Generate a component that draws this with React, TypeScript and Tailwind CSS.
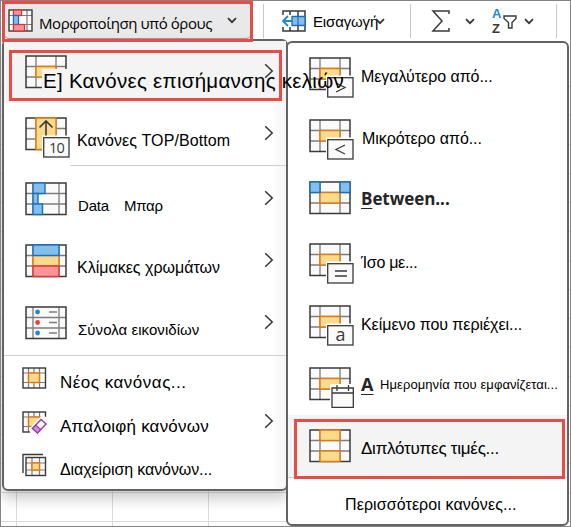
import type { ReactNode } from "react";

const DARK = "#3b3a39";
const MID = "#7f7d7b";
const ORANGE = "#e07a10";
const SAND = "#fadb8e";
const BLUE = "#1a6fba";
const SKY = "#83beec";

function Grid({ v = [11, 31], children }: { v?: number[]; children?: ReactNode }) {
  return (
    <svg width="46" height="43" viewBox="0 0 46 43" className="block shrink-0" fill="none">
      <rect x="1" y="1" width="40" height="31.5" fill="#fafafa" />
      <path d={`M1 11.5H41M1 22H41M${v[0]} 1V32M${v[1]} 1V32`} stroke={MID} strokeWidth="1.3" />
      <rect x="1" y="1" width="40" height="31.5" stroke={DARK} strokeWidth="1.5" />
      {children}
    </svg>
  );
}

function Cell({ y, h = 10.5, fill = SAND, stroke = ORANGE, x = 11, w = 20 }: { y: number; h?: number; fill?: string; stroke?: string; x?: number; w?: number }) {
  return <rect x={x} y={y} width={w} height={h} fill={fill} stroke={stroke} strokeWidth="1.4" />;
}

function Badge({ children }: { children: ReactNode }) {
  return (
    <g>
      <path d="M17 18.5H46V43H17Z" fill="#fff" />
      <rect x="18.7" y="20.7" width="25.3" height="19.3" fill="#fafafa" stroke={DARK} strokeWidth="1.3" />
      {children}
    </g>
  );
}

function CompareIcon({ children }: { children?: ReactNode }) {
  return (
    <Grid>
      <Cell y={11.5} />
      {children}
    </Grid>
  );
}

function SmallGrid({ children }: { children?: ReactNode }) {
  return (
    <svg width="26" height="24" viewBox="0 0 26 24" className="block shrink-0" fill="none">
      <rect x="1" y="1" width="22.5" height="20" fill="#fafafa" />
      <path d="M1 6H23M1 15.5H23M6.5 1V21M17.5 1V21M12 1V21" stroke={MID} strokeWidth="1.2" />
      <rect x="1" y="1" width="22.5" height="20" stroke={DARK} strokeWidth="1.4" />
      {children}
    </svg>
  );
}

function Down({ className = "" }: { className?: string }) {
  return (
    <svg width="10" height="7" viewBox="0 0 10 7" fill="none" className={`block shrink-0 ${className}`}>
      <path d="M1 1.2L5 5.2L9 1.2" stroke="#333" strokeWidth="1.7" />
    </svg>
  );
}

function Right({ className = "" }: { className?: string }) {
  return (
    <svg width="10" height="16" viewBox="0 0 10 16" fill="none" className={`block shrink-0 ${className}`}>
      <path d="M1.2 1.2L8.2 8L1.2 14.8" stroke="#333" strokeWidth="1.5" />
    </svg>
  );
}

function Row({ icon, label, arrow = true, className = "" }: { icon: ReactNode; label?: ReactNode; arrow?: boolean; className?: string }) {
  return (
    <div className={`flex h-[62px] shrink-0 items-start pl-[21px] pr-3 ${className}`}>
      <div className="w-[52px] shrink-0 pt-[14px]">{icon}</div>
      {label}
      {arrow && <Right className="ml-auto mt-[22px]" />}
    </div>
  );
}

function RuleRow({ icon, label, className = "" }: { icon: ReactNode; label: ReactNode; className?: string }) {
  return (
    <div className={`flex h-[62px] items-start pl-[21px] ${className}`}>
      <div className="w-[52px] shrink-0 pt-[14px]">{icon}</div>
      {label}
    </div>
  );
}

function Toolbar() {
  return (
    <div className="flex h-[42px] items-start bg-white pl-[3px]">
      <div className="mt-[2px] flex h-[37px] w-[249px] items-start rounded-md border border-[#9a9a9a] bg-[#e9e9e9] pl-1">
        <svg width="26" height="24" viewBox="0 0 26 24" fill="none" className="mt-[6px] block shrink-0">
          <rect x="1" y="1" width="23" height="21" fill="#fafafa" />
          <path d="M1 6.5H24M1 15.5H24M19 1V22M5.5 1V22" stroke={MID} strokeWidth="1.2" />
          <rect x="1" y="1" width="23" height="21" stroke={DARK} strokeWidth="1.4" />
          <rect x="5.5" y="1" width="8" height="5.5" fill="#fd9398" stroke="#dc3434" strokeWidth="1.3" />
          <rect x="5.5" y="6.5" width="5" height="9" fill={SKY} stroke={BLUE} strokeWidth="1.2" />
          <rect x="5.5" y="15.5" width="11" height="6.5" fill="#fd9398" stroke="#dc3434" strokeWidth="1.3" />
        </svg>
        <span className="ml-[5px] mt-[10px] w-[174px] whitespace-nowrap font-['Open_Sans'] text-[15px] leading-5 tracking-[-0.42px]">Μορφοποίηση υπό όρους</span>
        <Down className="ml-[14px] mt-[14px]" />
      </div>
      <div className="ml-[11px] mt-1 h-[34px] w-px bg-[#c8c8c8]" />
      <svg width="26" height="24" viewBox="0 0 26 24" fill="none" className="ml-[17px] mt-[9px] block shrink-0">
        <path d="M2 6V2H24V22H2V18M9 2V22M17 2V22" stroke={DARK} strokeWidth="1.5" />
        <path d="M11 7.5H24V16.5H11Z" fill={SKY} stroke={BLUE} strokeWidth="1.3" />
        <path d="M17 8V16" stroke={BLUE} strokeWidth="1.2" />
        <path d="M0 6H10V18H0Z" fill="#fff" />
        <path d="M12 12H2M7 7L2 12L7 17" stroke="#2488d0" strokeWidth="1.8" />
      </svg>
      <span className="ml-[6px] mt-[12px] w-[62px] whitespace-nowrap text-[15px] leading-5 tracking-[-0.15px]">Εισαγωγή</span>
      <Down className="mt-[18px]" />
      <div className="ml-[25px] mt-1 h-[34px] w-px bg-[#c8c8c8]" />
      <svg width="20" height="24" viewBox="0 0 20 24" fill="none" className="ml-[20px] mt-[9px] block shrink-0">
        <path d="M18 5V2H2L11 12L2 22H18V19" stroke={DARK} strokeWidth="1.5" />
      </svg>
      <Down className="ml-[14px] mt-[18px]" />
      <div className="ml-[17px] mt-[6px] flex w-[11px] flex-col text-[13px] font-bold leading-[15px]">
        <span className="text-[#2488d0]">A</span>
        <span className="text-[#3b3a39]">Z</span>
      </div>
      <svg width="14" height="15" viewBox="0 0 14 15" fill="none" className="mt-[15px] block shrink-0">
        <path d="M1 1H13V3.5L9 7.5V13H5.5V7.5L1 3.5Z" stroke={DARK} strokeWidth="1.4" />
      </svg>
      <Down className="ml-[7px] mt-[18px]" />
      <div className="ml-[22px] mt-1 h-[34px] w-px bg-[#c8c8c8]" />
    </div>
  );
}

function Sheet() {
  return (
    <div className="relative h-[485px] overflow-hidden bg-white">
      <div className="flex flex-col pt-[16px]">
        {Array.from({ length: 16 }, (_, i) => (
          <div key={i} className="h-[29px] shrink-0 border-b border-[#dadada]" />
        ))}
      </div>
      <div className="absolute inset-0 flex pl-[16px]">
        {Array.from({ length: 6 }, (_, i) => (
          <div key={i} className="w-[96px] shrink-0 border-l border-[#dadada]" />
        ))}
      </div>
    </div>
  );
}

function FormatMenu() {
  return (
    <div className="absolute left-[2px] top-[39px] flex h-[452px] w-[286px] flex-col rounded-md border-2 border-[#636363] bg-linear-to-r from-white from-95% to-[#f5f5f5] shadow-[0_8px_14px_rgba(0,0,0,0.2)]">
      <Row className="bg-[#f4f4f4]" icon={<CompareIcon />} />
      <Row
        icon={
          <Grid>
            <path d="M11 1H31V32.5H11Z" fill={SAND} stroke={ORANGE} strokeWidth="1.4" />
            <path d="M21 20V4M14.5 10.5L21 4L27.5 10.5" stroke={DARK} strokeWidth="1.6" />
            <Badge><text x="31.5" y="35.7" textAnchor="middle" fontFamily="Open Sans" fontSize="14.5" letterSpacing="-0.8" fill={DARK}>10</text></Badge>
          </Grid>
        }
        label={<span className="mt-[28px] whitespace-nowrap leading-5 tracking-[0.08px]">Κανόνες TOP/Bottom</span>}
      />
      <div className="ml-[66px] h-px shrink-0 bg-[#cfcfcf]" />
      <Row
        className="mt-[2px]"
        icon={
          <Grid v={[8, 34]}>
            <Cell x={8} y={1} w={12} fill={SKY} stroke={BLUE} />
            <Cell x={8} y={11.5} w={5} fill={SKY} stroke={BLUE} />
            <Cell x={8} y={22} w={9.5} fill={SKY} stroke={BLUE} />
          </Grid>
        }
        label={<span className="mt-[28px] flex gap-[15px] pl-px text-[15px] leading-5 tracking-[-0.2px]"><span>Data</span><span>Μπαρ</span></span>}
      />
      <Row
        icon={
          <Grid v={[8, 34]}>
            <Cell x={8} w={26} y={11.5} />
            <Cell x={8} w={26} y={22} fill="#fd9398" stroke="#dc3434" />
            <Cell x={8} w={26} y={1} fill={SKY} stroke={BLUE} />
          </Grid>
        }
        label={<span className="mt-[28px] whitespace-nowrap leading-5">Κλίμακες χρωμάτων</span>}
      />
      <Row
        icon={
          <Grid v={[8, 34]}>
            <path d="M24 6H32M24 16.5H32M24 27H32" stroke={MID} strokeWidth="1.4" />
            <circle cx="12.6" cy="6" r="2.4" fill="#2488d0" />
            <circle cx="12.6" cy="16.5" r="2.4" fill="#e8403c" />
            <circle cx="12.6" cy="27" r="2.4" fill="#2488d0" />
          </Grid>
        }
        label={<span className="mt-[28px] whitespace-nowrap pl-px text-[15px] leading-5 tracking-[0.05px]">Σύνολα εικονιδίων</span>}
      />
      <div className="mt-px h-px shrink-0 bg-[#cfcfcf]" />
      <div className="flex h-[44px] items-start pl-[18px] pt-[11px]">
        <SmallGrid><rect x="6.5" y="6" width="11" height="9.5" fill={SAND} stroke={ORANGE} strokeWidth="1.4" /></SmallGrid>
        <span className="ml-[12px] mt-[6px] whitespace-nowrap text-[17px] leading-5 tracking-[0.5px]">Νέος κανόνας...</span>
      </div>
      <div className="flex h-[44px] items-start pl-[18px] pr-3 pt-[11px]">
        <SmallGrid>
          <rect x="6.5" y="6" width="11" height="9.5" fill={SAND} stroke={ORANGE} strokeWidth="1.4" />
          <path d="M7 18L20 4L26 7V24H9Z" fill="#fff" />
          <path d="M10.5 17.5L19 8.5L24 13L15.5 22Z" fill="#fff" stroke="#9b3fa8" strokeWidth="1.5" />
          <path d="M10.5 17.5L13.8 14L18.8 18.5L15.5 22Z" fill="#d18bd8" stroke="#9b3fa8" strokeWidth="1.2" />
        </SmallGrid>
        <span className="ml-[12px] mt-[6px] whitespace-nowrap text-[17px] leading-5 tracking-[0.2px]">Απαλοιφή κανόνων</span>
        <Right className="ml-auto mt-[2px]" />
      </div>
      <div className="flex items-start pl-[18px] pt-[9px]">
        <svg width="26" height="25" viewBox="0 0 26 25" fill="none" className="block shrink-0">
          <path d="M1 20V1.5H21" stroke={DARK} strokeWidth="1.4" />
          <rect x="4" y="4.5" width="19.5" height="18" fill="#fafafa" />
          <path d="M4 10H23M4 17H23M10 4V22M17.5 4V22" stroke={MID} strokeWidth="1.2" />
          <rect x="4" y="4.5" width="19.5" height="18" stroke={DARK} strokeWidth="1.4" />
          <rect x="10" y="10" width="7.5" height="7" fill={SAND} stroke={ORANGE} strokeWidth="1.4" />
        </svg>
        <span className="ml-[12px] mt-[7px] whitespace-nowrap leading-5 tracking-[-0.1px]">Διαχείριση κανόνων...</span>
      </div>
    </div>
  );
}

function RulesMenu() {
  return (
    <div className="absolute left-[286px] top-[41px] flex h-[485px] w-[283px] flex-col rounded-md border-2 border-[#636363] bg-white">
      <RuleRow icon={<CompareIcon><Badge><path d="M27 26L36 30.5L27 35" stroke={DARK} strokeWidth="1.3" /></Badge></CompareIcon>} label={<span className="mt-[24px] leading-5 tracking-[-0.05px]">Μεγαλύτερο από...</span>} />
      <RuleRow icon={<CompareIcon><Badge><path d="M36 26L27 30.5L36 35" stroke={DARK} strokeWidth="1.3" /></Badge></CompareIcon>} label={<span className="mt-[24px] pl-px leading-5 tracking-[-0.08px]">Μικρότερο από...</span>} />
      <RuleRow
        icon={
          <CompareIcon>
            <Cell x={1} y={1} w={10} fill={SKY} stroke={BLUE} />
            <Cell x={31} y={1} w={10} fill={SKY} stroke={BLUE} />
          </CompareIcon>
        }
        label={<span className="mt-[22px] font-['Open_Sans'] text-[17px] font-bold leading-5 tracking-[-0.05px] text-[#252525]"><span className="underline decoration-1 underline-offset-3">B</span>etween...</span>}
      />
      <RuleRow icon={<CompareIcon><Badge><path d="M26 28H38M26 33H38" stroke={DARK} strokeWidth="1.4" /></Badge></CompareIcon>} label={<span className="mt-[24px] leading-5 tracking-[-0.3px]">Ίσο με...</span>} />
      <RuleRow icon={<CompareIcon><Badge><text x="31.5" y="36" textAnchor="middle" fontFamily="Open Sans" fontSize="18" fill={DARK}>a</text></Badge></CompareIcon>} label={<span className="mt-[24px] leading-5 tracking-[-0.05px]">Κείμενο που περιέχει...</span>} />
      <RuleRow
        icon={
          <CompareIcon>
            <path d="M21 17H46V43H21Z" fill="#fff" />
            <path d="M23 21H44.3V40.3H23ZM23 26H44.3M28 18V24M39.5 18V24" stroke={DARK} strokeWidth="1.3" fill="#fafafa" />
          </CompareIcon>
        }
        label={
          <span className="mt-[21px] flex whitespace-nowrap text-[13px] leading-5 tracking-[0.08px]">
            <span className="w-[19px] font-['Open_Sans'] text-[18px] font-bold text-[#252525]"><span className="underline decoration-1 underline-offset-3">A</span></span>
            <span className="pt-px">Ημερομηνία που εμφανίζεται...</span>
          </span>
        }
      />
      <RuleRow
        className="bg-[#f4f4f4]"
        icon={
          <Grid>
            <Cell y={1} />
            <Cell y={22} />
          </Grid>
        }
        label={<span className="mt-[24px] text-[17px] leading-5 tracking-[-0.25px]">Διπλότυπες τιμές...</span>}
      />
      <div className="h-px shrink-0 bg-[#cfcfcf]" />
      <span className="ml-[57px] mt-[17px] leading-5 tracking-[0.1px]">Περισσότεροι κανόνες...</span>
    </div>
  );
}

export default function App() {
  return (
    <div className="relative h-[527px] w-[571px] overflow-hidden bg-white font-['Liberation_Sans',sans-serif] text-base text-black">
      <Toolbar />
      <Sheet />
      <FormatMenu />
      <RulesMenu />
      <div className="absolute left-[42px] top-[69px] h-[22px] w-[25px] bg-[#f4f4f4]" />
      <span className="absolute left-[43px] top-[69px] whitespace-nowrap text-[20.5px] leading-6 tracking-[0.28px]">E] Κανόνες επισήμανσης κελιών</span>
      <div className="absolute left-[2px] top-px h-[41px] w-[251px] border-3 border-[#e84c46]" />
      <div className="absolute left-[9px] top-[50px] h-[51px] w-[273px] border-3 border-[#e84c46]" />
      <div className="absolute left-[294px] top-[419px] h-[60px] w-[271px] border-3 border-[#e84c46]" />
      <div className="pointer-events-none absolute inset-0 border border-[#858585]" />
    </div>
  );
}
